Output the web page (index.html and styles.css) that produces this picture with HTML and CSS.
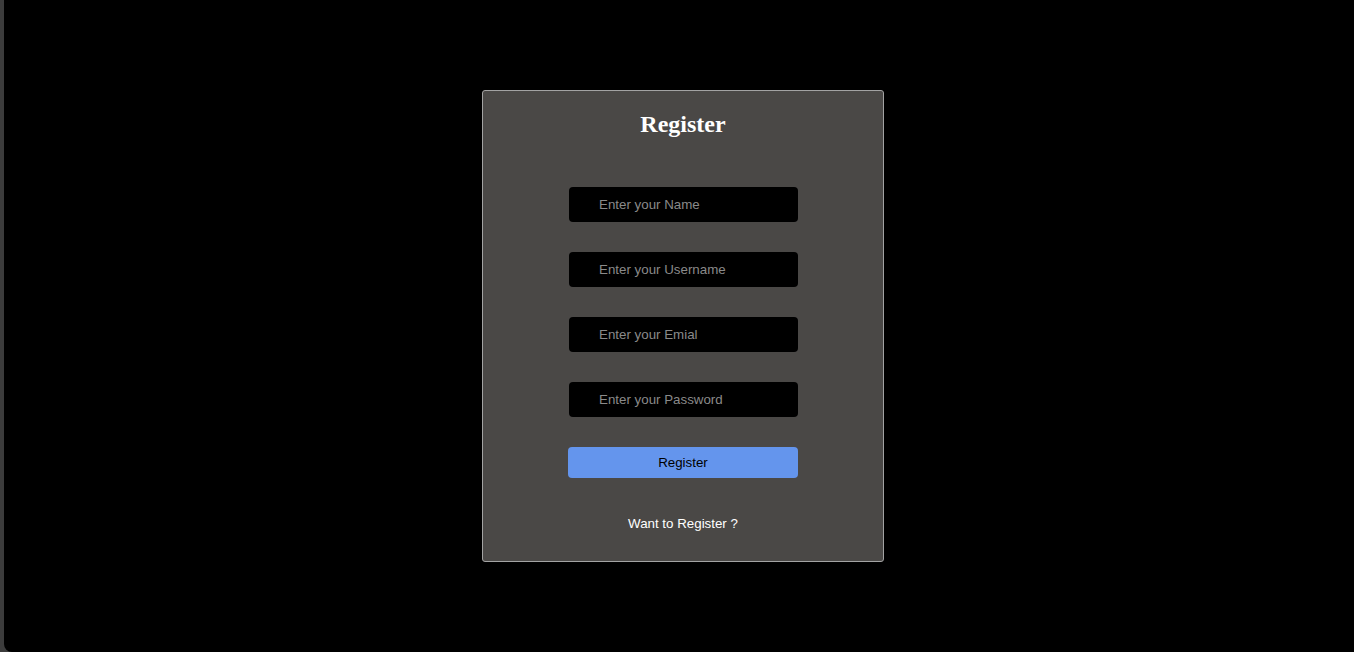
FILE: index.html
```html
<!DOCTYPE html>
<html>
<head>
<meta charset="utf-8">
<link rel="stylesheet" href="styles.css">
</head>
<body>
<main class="screen">
  <div class="card">
    <h2 class="title">Register</h2>
    <form class="form">
      <input class="field" type="text" placeholder="Enter your Name">
      <input class="field" type="text" placeholder="Enter your Username">
      <input class="field" type="text" placeholder="Enter your Emial">
      <input class="field" type="password" placeholder="Enter your Password">
      <button class="btn" type="button">Register</button>
    </form>
    <p class="link">Want to Register ?</p>
  </div>
</main>
</body>
</html>
```
FILE: styles.css
```css
html, body {
  margin: 0;
  padding: 0;
  height: 100%;
  background: #3c3c3c;
  overflow: hidden;
}
.screen {
  margin-left: 4px;
  height: 652px;
  background: #000;
  border-bottom-left-radius: 8px;
  display: flex;
  justify-content: center;
  align-items: flex-start;
  padding-left: 8px;
  box-sizing: border-box;
}
.card {
  margin-top: 90px;
  width: 402px;
  height: 472px;
  box-sizing: border-box;
  background: #4a4846;
  border: 1px solid #a3a3a3;
  border-radius: 3px;
  display: flex;
  flex-direction: column;
  align-items: center;
  padding-top: 19px;
}
.title {
  margin: 0;
  font-family: "Liberation Serif", serif;
  font-weight: bold;
  font-size: 24px;
  line-height: 28px;
  color: #fff;
}
.form {
  margin-top: 49px;
  display: flex;
  flex-direction: column;
  gap: 30px;
  width: 230px;
  align-items: flex-end;
}
.field {
  width: 229px;
  height: 35px;
  box-sizing: border-box;
  border: none;
  border-radius: 4px;
  background: #000;
  padding: 0 0 0 30px;
  font-family: "Liberation Sans", Arial, sans-serif;
  font-size: 13.33px;
  color: #fff;
  outline: none;
}
.field::placeholder {
  color: #8a8a8a;
}
.btn {
  width: 230px;
  height: 31px;
  border: none;
  border-radius: 4px;
  background: #6495ed;
  color: #000;
  font-family: "Liberation Sans", Arial, sans-serif;
  font-size: 13.33px;
}
.link {
  margin: 38px 0 0;
  font-family: "Liberation Sans", Arial, sans-serif;
  font-size: 13.33px;
  line-height: 16px;
  color: #fff;
}
```
